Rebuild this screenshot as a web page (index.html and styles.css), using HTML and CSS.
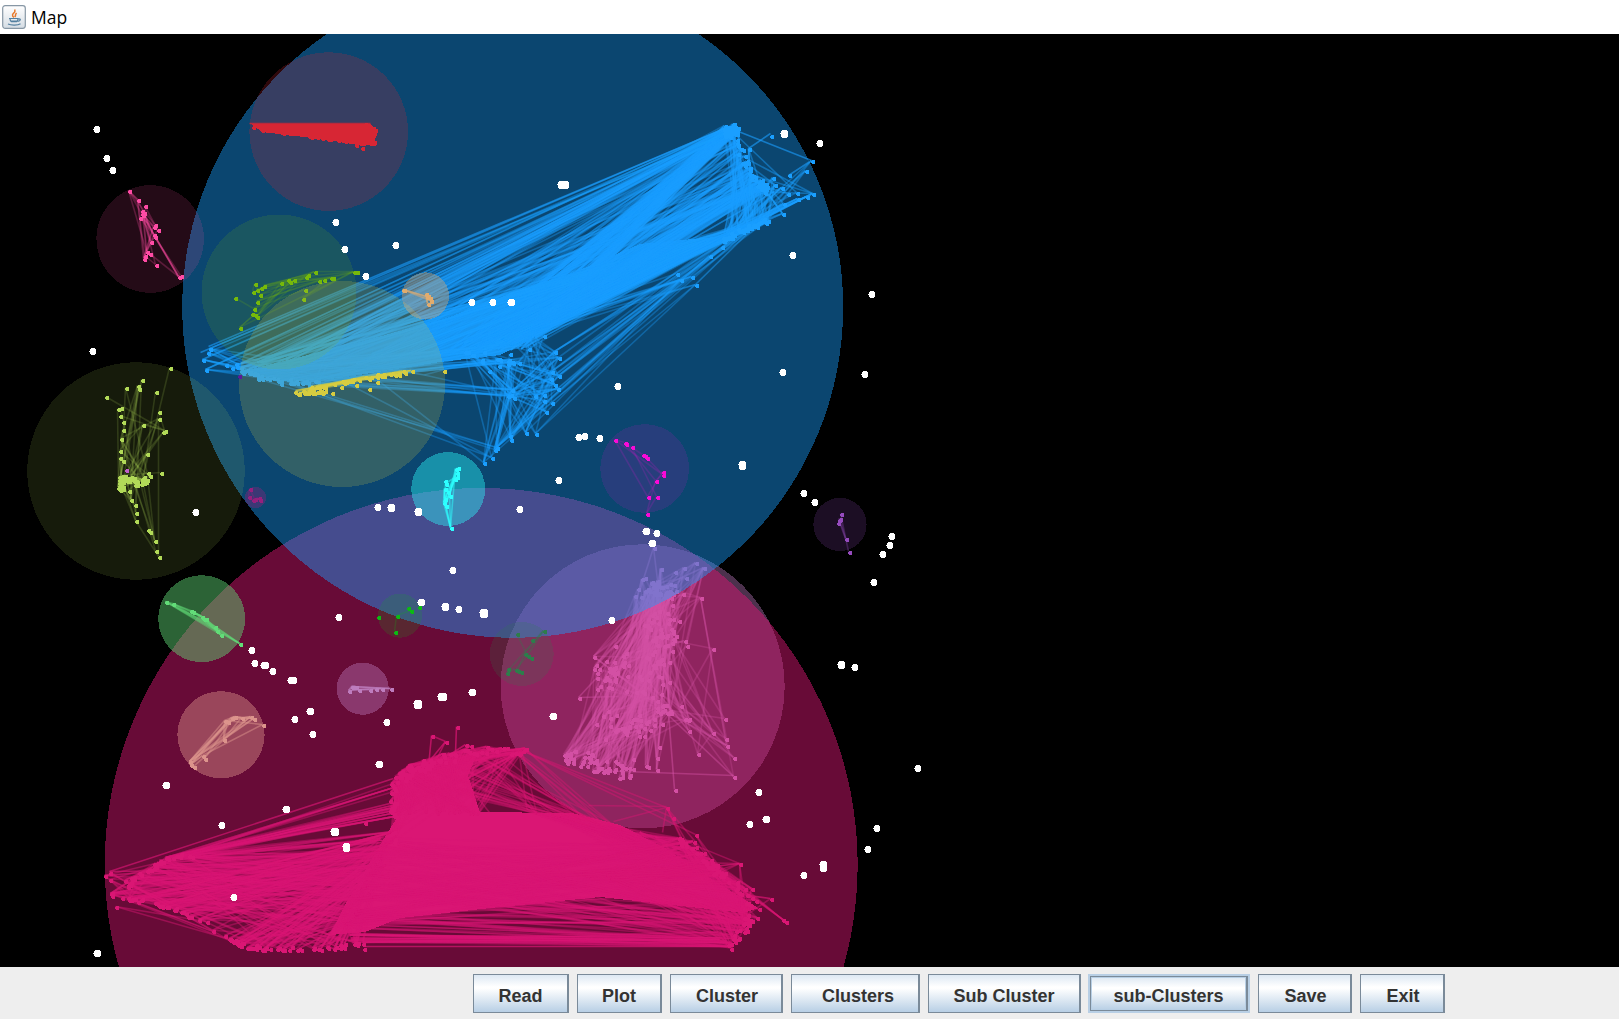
FILE: index.html
```html
<!DOCTYPE html>
<html lang="en">
<head>
<meta charset="utf-8">
<title>Map</title>
<link rel="stylesheet" href="styles.css">
</head>
<body>
<div class="window">
  <header class="titlebar">
    <svg class="app-icon" viewBox="0 0 24 24" width="24" height="24">
      <defs><linearGradient id="tile" x1="0" y1="0" x2="0" y2="1"><stop offset="0" stop-color="#fff"/><stop offset="1" stop-color="#d5dde4"/></linearGradient></defs>
      <rect x=".7" y=".7" width="22.6" height="22.6" rx="2.5" fill="url(#tile)" stroke="#8797a5" stroke-width="1.2"/>
      <path d="M12 12.5c-3-2.4-.8-3.800.5-5.200.6-.9.6-1.700.2-2.900M12.800 12c1.500-1.800-.2-2.200 1.800-4" fill="none" stroke="#e8792b" stroke-width="1.500"/>
      <path d="M7 13.500h9.500M8 13.700c0 1.500.5 2.500 1.500 3h5c1-.5 1.500-1.500 1.500-3M16.500 14c2.500-.5 2.500 2-.8 2.300M8.500 16.200h7M6 19c3 1.500 10 1.500 12.500-.3" fill="none" stroke="#527f9f" stroke-width="1.200"/>
    </svg>
    <span class="title">Map</span>
  </header>
  <main class="plot">
    <svg id="map" class="map" width="1619" height="933" viewBox="0 34 1619 933" shape-rendering="crispEdges"></svg>
  </main>
  <footer class="toolbar">
    <button class="btn btn-read">Read</button>
    <button class="btn btn-plot">Plot</button>
    <button class="btn btn-cluster">Cluster</button>
    <button class="btn btn-clusters">Clusters</button>
    <button class="btn btn-sub">Sub Cluster</button>
    <button class="btn btn-subs focused">sub-Clusters</button>
    <button class="btn btn-save">Save</button>
    <button class="btn btn-exit">Exit</button>
  </footer>
</div>
<script src="map.js"></script>
</body>
</html>
```
FILE: styles.css
```css
* { box-sizing: border-box; }
body { margin: 0; background: #000; overflow: hidden; }
.window { display: flex; flex-direction: column; width: 1619px; height: 1019px; }
.titlebar { flex: 0 0 34px; display: flex; align-items: center; gap: 5px; padding: 0 0 1px 2px; background: #fff; }
.app-icon { display: block; }
.title { font: 17.5px/24px "Open Sans", "Noto Sans", sans-serif; color: #000; padding-top: 1px; }
.plot { flex: 1 1 auto; min-height: 0; background: #000; }
.map { display: block; }
.toolbar { flex: 0 0 52px; display: flex; align-items: flex-start; gap: 8px; padding: 7px 0 0 473px; background: #eee; }
.btn {
  height: 39px; margin: 0; padding: 4px 0 0; border: 1px solid #7a8a99; border-right-width: 2px; border-radius: 0;
  background: linear-gradient(#dde8f3 0%, #fff 32%, #fff 36%, #b8cfe5 100%);
  font: bold 18px/20px "Liberation Sans", Arial, sans-serif; color: #333; text-align: center;
}
.btn-read { width: 96px; }
.btn-plot { width: 85px; }
.btn-cluster { width: 113px; padding-left: 2px; }
.btn-clusters { width: 129px; padding-left: 6px; }
.btn-sub { width: 153px; }
.btn-subs { width: 158px; }
.btn-save { width: 94px; padding-left: 2px; }
.btn-exit { width: 85px; padding-left: 2px; }
.focused { height: 35px; margin: 2px 2px 0 1px; padding-top: 4px; box-shadow: 0 0 0 2px #b8cfe5, inset 0 0 0 1px #b8cfe5; }
```
FILE: map.js
```js
const NS = "http://www.w3.org/2000/svg";
const map = document.getElementById("map");
let seed = 20177;
const rnd = () => (seed = (seed * 16807) % 2147483647) / 2147483647;
const pick = a => a[Math.floor(rnd() * a.length)];

function add(name, attrs) {
  const e = document.createElementNS(NS, name);
  for (const k in attrs) e.setAttribute(k, attrs[k]);
  map.appendChild(e);
}
const circle = (cx, cy, r, c, a) => add("circle", { cx, cy, r, fill: c, "fill-opacity": a });
const poly = (s, c, a = 1) => add("polygon", { points: s, fill: c, "fill-opacity": a });
const line = (p, q, c, a = .45) =>
  add("path", { d: `M${p[0] - 1.5} ${p[1] - 1.5}L${q[0] - 1.5} ${q[1] - 1.5}`, stroke: c, "stroke-opacity": a, "stroke-width": 1.6, "shape-rendering": "auto" });
const dots = (pts, c) => add("path", {
  fill: c,
  d: pts.map(p => `M${Math.round(p[0]) - 2} ${Math.round(p[1]) - 1}h1v-1h3v4h-3v-1h-1z`).join("")
});
// Points scattered along a polyline
function along(path, n, jx = 2, jy = jx) {
  const out = [];
  for (let i = 0; i < n; i++) {
    const t = rnd() * (path.length - 1), k = Math.floor(t), f = t - k;
    const p = path[k], q = path[k + 1];
    out.push([p[0] + (q[0] - p[0]) * f + (rnd() - .5) * 2 * jx, p[1] + (q[1] - p[1]) * f + (rnd() - .5) * 2 * jy]);
  }
  return out;
}
const blob = (x, y, rx, ry, n) => Array.from({ length: n }, () =>
  [x + (rnd() + rnd() - 1) * rx, y + (rnd() + rnd() - 1) * ry]);
const link = (a, b, n, c, o) => { for (let i = 0; i < n; i++) line(pick(a), pick(b), c, o); };

// Orchid cluster
{
  const c = "#ce85d2";
  circle(642.7, 686.3, 142, c, .37);
  const top = blob(660, 590, 26, 12, 45), tr = [[697, 564], [705, 569], [685, 569], [676, 573], [687, 579], [662, 570], [702, 599]];
  const mid = [...along([[668, 605], [657, 650], [650, 700]], 65, 17, 12), ...along([[655, 700], [668, 715]], 14, 8), [690, 720], [686, 642], [688, 647], [672, 630], [675, 641]];
  const left = blob(612, 672, 18, 26, 38), low = blob(630, 728, 38, 22, 32);
  const bot = along([[565, 758], [590, 762], [633, 776]], 62, 8, 8);
  const right = [[714, 650], [726, 720], [714, 734], [727, 740], [728, 747], [735, 759], [735, 778], [699, 755], [690, 732], [682, 707], [686, 720], [689, 721]];
  const foot = [[658, 771], [647, 767], [649, 768], [658, 759], [634, 760], [645, 737], [660, 748]];
  link(top, mid, 80, c, .3); link(mid, low, 60, c, .3); link(top, low, 50, c, .3);
  link(mid, bot, 62, c, .3); link(top, left, 40, c, .3); link(left, bot, 30, c, .3);
  link(low, bot, 36, c, .3); link(left, mid, 28, c, .3); link(tr, mid, 26, c, .3);
  link(tr, top, 14, c, .3); link(right, mid, 26, c, .3); link(right, right, 6, c, .3);
  link(foot, mid, 24, c, .3);
  line([655, 549], [642, 590], c); line([655, 549], [660, 590], c);
  line([702, 599], [728, 747], c); line([702, 599], [735, 778], c, .25);
  line([600, 772], [735, 777], c); line([668, 715], [735, 778], c);
  line([676, 791], [670, 715], c, .5); line([580, 699], [605, 672], c); line([580, 699], [620, 698], c);
  dots([...top, ...tr, ...mid, ...left, ...low, ...bot, ...right, ...foot, [676, 791], [580, 699], [655, 549]], c);
}

// Crimson cluster
{
  const c = "#da1674";
  circle(481.2, 864.5, 376.500, c, .48);
  const tip = [[106, 877], [111, 874], [111, 881], [112, 895], [117, 908], [130, 901], [126, 882]];
  const ul = along([[127, 888], [135, 878], [155, 868], [171, 857], [198, 857]], 35, 2);
  const bl = along([[112, 894], [130, 901], [150, 902], [180, 912], [205, 922], [228, 940], [245, 946]], 48, 2);
  const bottom = along([[243, 947], [270, 950], [322, 950], [365, 944]], 45, 4, 2);
  const neck = along([[388, 845], [375, 870], [365, 900], [350, 935]], 50, 8);
  const high = along([[394, 785], [394, 850]], 20, 3);
  const crown = along([[395, 783], [415, 770], [440, 762], [475, 750], [528, 752]], 75, 6, 4);
  const shoulder = along([[530, 814], [610, 830], [665, 845], [710, 868]], 50, 8, 4);
  const re = along([[680, 840], [693, 848], [710, 865], [722, 875], [740, 888], [757, 910], [745, 930], [733, 947]], 85, 5, 4);
  const far = [[668, 809], [674, 819], [697, 836], [741, 865], [753, 890], [772, 900], [784, 921], [787, 923]];
  poly("398,816 470,812 572,813 620,825 665,848 705,875 758,908 744,913 690,907 600,897 500,907 400,918 365,932 330,935 345,905 380,845", c);
  poly("394,786 408,773 440,764 478,752 468,775 480,813 395,817", c);
  link(ul, neck, 105, c, .42); link(bl, neck, 120, c, .42); link(bottom, neck, 110, c, .42);
  link(bl, high.filter(p => p[1] > 830), 20, c); link(ul, bottom, 16, c);
  link(tip, neck, 16, c, .42); link(tip, ul, 12, c); link(tip, bl, 12, c);
  link(ul.filter(p => p[0] > 160), high, 40, c, .42); link(crown, high, 90, c); link(crown, crown, 100, c);
  link(crown, shoulder.filter(p => p[0] < 640), 40, c, .4); link(crown, along([[490, 814], [400, 814]], 20, 3), 90, c);
  link(shoulder, re, 110, c, .42); link(neck, re, 120, c, .42); link(re, re, 75, c, .42);
  link(along([[360, 915], [350, 940], [365, 944]], 20, 2), along([[722, 937], [732, 947]], 20, 4), 38, c, .42);
  link(re, along([[500, 875], [650, 880]], 15, 3), 80, c); link(far, re, 25, c);
  line([366, 948], [732, 948], c, .7); line([111, 873], [395, 780], c, .65); line([111, 873], [190, 872], c, .65);
  line([130, 901], [217, 934], c, .65); line([526, 753], [674, 819], c); line([526, 753], [668, 809], c);
  line([526, 753], [697, 836], c); line([590, 807], [668, 808], c); line([615, 823], [668, 809], c); line([668, 809], [664, 834], c);
  line([741, 865], [715, 868], c, .7); line([772, 900], [735, 895], c, .7);
  const spikes = [[433, 737], [458, 728], [447, 743], [467, 746], [424, 761], [410, 771]];
  [[430, 768], [457, 754], [429, 765], [450, 757], [424, 772], [405, 776]].forEach((p, i) => line(spikes[i], p, c, .7));
  line([433, 737], [447, 743], c, .6); line([447, 743], [437, 763], c, .6);
  dots([...tip, ...ul, ...bl, ...bottom, ...crown, ...re, ...far, ...spikes, ...high, [366, 824], [365, 950], [302, 951]], c);
}

// Azure cluster
{
  const c = "#1a9fff";
  circle(512.7, 307.3, 330.500, c, .44);
  const tips = [[204, 361], [209, 354], [211, 350], [207, 371], [227, 366]];
  const low = along([[230, 365], [260, 378], [300, 385], [360, 382], [440, 372]], 60, 3, 3);
  const body = along([[240, 370], [380, 358], [480, 352], [530, 345]], 100, 5, 5);
  const core = along([[460, 345], [520, 345], [540, 330]], 40, 6, 5);
  const cap = blob(732, 131, 9, 7, 55);
  const edge = along([[738, 138], [742, 155], [752, 172], [760, 184], [768, 190]], 50, 3, 4);
  const side = along([[724, 242], [745, 230], [770, 221]], 42, 3, 2);
  const out = [[813, 162], [807, 172], [790, 176], [774, 179], [783, 189], [798, 194], [814, 195], [808, 198], [799, 200], [785, 205], [784, 215], [750, 150], [776, 186], [789, 195]];
  poly("240,372 300,357 360,342 447,318 515,292 580,270 640,244 726,236 660,270 600,300 560,322 530,340 500,355 440,362 340,378 290,382", c, .9);
  link(cap, body, 125, c, .38); link(cap, core, 85, c, .38); link(edge, body, 110, c, .38);
  link(side, body, 110, c, .42); link(side, core, 70, c, .42); link(edge, core, 60, c, .38);
  link(cap, tips, 8, c, .4); link(tips, low, 18, c, .4); link(low, body, 40, c); link(cap, side, 26, c, .38);
  link(edge, side, 40, c, .38); link(out, side, 30, c, .42); link(out.slice(2), edge, 12, c);
  link(out.slice(4, 11), core, 18, c, .38);
  line([740, 133], [813, 162], c, .6); line([772, 135], [750, 150], c, .6); line([813, 162], [790, 177], c, .6);
  line([731, 128], [202, 354], c, .6); line([731, 128], [210, 348], c, .6);
  const hub = [[512, 396], [513, 391], [509, 397], [515, 399]];
  const south = [[512, 441], [511, 437], [496, 451], [498, 449], [485, 464], [493, 459], [527, 434], [537, 435], [553, 404], [547, 413], [559, 390]];
  const east = [[536, 397], [545, 396], [545, 402], [552, 380], [556, 386], [560, 377], [556, 353], [560, 359], [545, 337], [530, 350], [553, 373]];
  const rung = along([[468, 350], [500, 365], [520, 358]], 18, 5);
  const o = .36;
  link(hub, east, 18, c, o); link(hub, rung, 20, c, o); link(hub, south, 18, c, o); link(south, east, 22, c, o);
  link(rung, east, 20, c, o); link(south, rung, 16, c, o); link(hub, low, 12, c, o); link(south.slice(2, 6), low, 6, c, o);
  link(rung, low, 20, c, o); link(south, [[697, 286], [687, 279], [682, 281], [711, 257], [752, 230], [740, 235]], 10, c, o);
  link(east, side, 16, c, o); link(east, core, 18, c, o);
  const rim = [[678, 275], [693, 278], [682, 281], [697, 286], [711, 257], [723, 248], [500, 360], [490, 372], [483, 363]];
  link(rim.slice(0, 4), core, 10, c, o); line([697, 286], [750, 234], c, .5);
  dots([...tips, ...low.filter(p => p[0] < 320), ...cap, ...edge, ...side, ...out, ...hub, ...south, ...east, ...rung, ...rim, [772, 137]], c);
}

// Smaller clusters: circle, colour, edge strength, points, number of edges
function cluster(cx, cy, r, c, a, pts, n, o = .35) {
  circle(cx, cy, r, c, a);
  link(pts, pts, n, c, o);
  dots(pts, c);
}
circle(328.7, 131.600, 79.3, "#d72634", .22);
poly("251,124 371,124 376,132 375,144 363,146 335,141 305,137 262,132", "#d72634");
line([251, 125], [372, 125], "#d72634", .8);
dots([[254, 128], [363, 149], [376, 131], [263, 131], [284, 134], [375, 143], [357, 146], ...along([[258, 127], [300, 134], [345, 141], [374, 143]], 50, 2, 2), ...blob(368, 130, 8, 7, 20)], "#d72634");

cluster(150.2, 239, 53.8, "#ff4ba5", .14, [[130, 192], [139, 201], [146, 207], [143, 212], [144, 216], [141, 219], [145, 214], [143, 215], [156, 226], [155, 228], [159, 231], [155, 236], [156, 238], [152, 243], [148, 253], [146, 257], [145, 260], [151, 255], [157, 266], [180, 278], [182, 277]], 36, .25);
cluster(279, 292, 77.500, "#76b90a", .14, [[236, 299], [241, 329], [256, 285], [254, 293], [258, 291], [262, 289], [265, 287], [261, 296], [258, 303], [255, 310], [253, 315], [256, 316], [258, 318], [282, 284], [289, 281], [291, 283], [295, 281], [307, 278], [309, 276], [316, 273], [306, 291], [304, 300], [320, 282], [325, 281], [332, 279], [334, 279], [355, 273], [358, 273]], 36, .18);
circle(342, 384, 103, "#d2c846", .2);
{
  const c = "#d6cc40", a = along([[297, 394], [330, 386], [370, 378], [412, 373]], 55, 3, 2);
  link(a, a, 50, c, .3); line([297, 392], [412, 372], c, .8);
  dots([...a, ...along([[296, 394], [320, 393], [336, 393]], 16, 1), [445, 372], [370, 390], [378, 383], [342, 388], [357, 386]], c);
}
cluster(425.500, 296, 23.600, "#e1ac6e", .38, [[405, 291], [427, 295], [429, 297], [431, 299], [432, 302], [429, 305], [404, 291], [428, 298]], 9, .5);
cluster(136, 471, 108.8, "#b2da58", .12, [
  [107, 398], [127, 389], [139, 387], [140, 390], [143, 381], [171, 369], [157, 393], [160, 413], [160, 420], [144, 426], [164, 433], [166, 432], [148, 455], [162, 474],
  [119, 410], [122, 409], [121, 417], [124, 423], [124, 431], [122, 440], [121, 452], [121, 459], [124, 462], [130, 492], [132, 501], [136, 506], [137, 514], [137, 522], [149, 531], [151, 533], [156, 542], [157, 552], [160, 558],
  ...along([[122, 490], [121, 480], [128, 478], [138, 484], [146, 480], [153, 473]], 55, 3)], 95, .17);
cluster(255.500, 497.500, 10.600, "#96207d", .35, [[251, 490], [250, 498], [256, 500], [260, 499], [261, 501], [254, 501]], 8);
cluster(448.2, 489, 37, "#2dffff", .4, [[457, 470], [459, 469], [458, 474], [458, 478], [456, 480], [447, 485], [446, 490], [449, 493], [451, 497], [446, 500], [445, 504], [447, 507], [452, 529], [446, 482]], 26, .5);
cluster(644.7, 468.500, 44.400, "#fa0ad7", .12, [[616, 441], [626, 444], [627, 445], [633, 448], [644, 456], [646, 457], [648, 459], [664, 473], [664, 476], [657, 482], [649, 498], [658, 498], [648, 515]], 12, .16);
cluster(201.700, 618.700, 43.500, "#62dc78", .45, [[167, 603], [174, 605], [192, 612], [194, 613], [203, 618], [205, 620], [207, 620], [216, 628], [218, 632], [222, 636], [241, 645]], 22, .45);
cluster(221, 734.700, 43.600, "#dc948c", .43, [[192, 766], [195, 768], [191, 763], [206, 760], [204, 757], [225, 741], [226, 722], [229, 723], [233, 719], [236, 718], [243, 719], [252, 718], [255, 720], [264, 726]], 34, .5);
cluster(362.700, 688.700, 26.100, "#be7dbe", .4, [[350, 692], [353, 688], [354, 688], [357, 688], [360, 691], [371, 691], [377, 690], [383, 690], [392, 690]], 18, .5);
cluster(400, 615.700, 22, "#0cb914", .16, [[379, 618], [396, 633], [398, 617], [409, 609], [412, 612], [420, 608]], 5, .2);
cluster(521.700, 654, 32, "#2d7d4b", .19, [[518, 635], [545, 632], [533, 641], [526, 655], [529, 657], [532, 659], [509, 670], [508, 674], [517, 671], [519, 672], [522, 673]], 10, .3);
cluster(840, 524.500, 26.600, "#964bbe", .19, [[842, 515], [840, 521], [841, 520], [839, 524], [847, 540], [850, 553]], 7, .3);
dots([[240, 377]], "#5a1a9a");
dots([[127, 471]], "#c060c8");

// Unclustered points, as x, y, extra width, extra height
const loose = [[97, 129], [107, 158], [113, 170], [336, 222], [345, 249], [396, 245], [366, 276], [563, 184, 5, 1], [784, 133, 1, 1], [820, 143], [793, 255], [872, 294], [865, 374], [783, 372], [618, 386], [472, 302], [493, 302], [511, 302, 1], [93, 351], [196, 512], [378, 507], [391, 507, 1, 1], [418, 511, 1, 1], [520, 509], [559, 480], [579, 437], [585, 436], [600, 438], [742, 465, 1, 2], [804, 493], [815, 502], [892, 536], [890, 545], [883, 554], [874, 582], [646, 531, 1], [657, 533], [652, 543, 1], [453, 570], [421, 602, 1], [445, 606, 1, 1], [459, 609], [484, 613, 2, 2], [339, 617], [612, 620], [252, 650], [255, 663], [265, 665, 2], [273, 671], [292, 680, 3], [295, 719], [310, 711, 1], [313, 734], [387, 722], [418, 704, 2, 2], [442, 696, 3, 1], [472, 692, 1], [553, 716, 1], [379, 764, 1], [166, 785, 1], [286, 809, 1], [222, 825], [335, 831, 2, 1], [346, 847, 1, 2], [234, 897], [97, 953, 1], [841, 664, 1, 1], [855, 667], [918, 768], [759, 792], [766, 819, 1], [750, 824], [877, 828], [868, 849], [823, 866, 1, 4], [804, 875]];
add("path", {
  fill: "#fff",
  d: loose.map(([x, y, w = 0, h = 0]) =>
    `M${x - 4 - (w >> 1)} ${y - (h >> 1)}h1v-2h1v-1h${4 + w}v1h1v${5 + h}h-1v1h-${4 + w}v-1h-1v-${2 + h}h-1z`).join("")
});
```
